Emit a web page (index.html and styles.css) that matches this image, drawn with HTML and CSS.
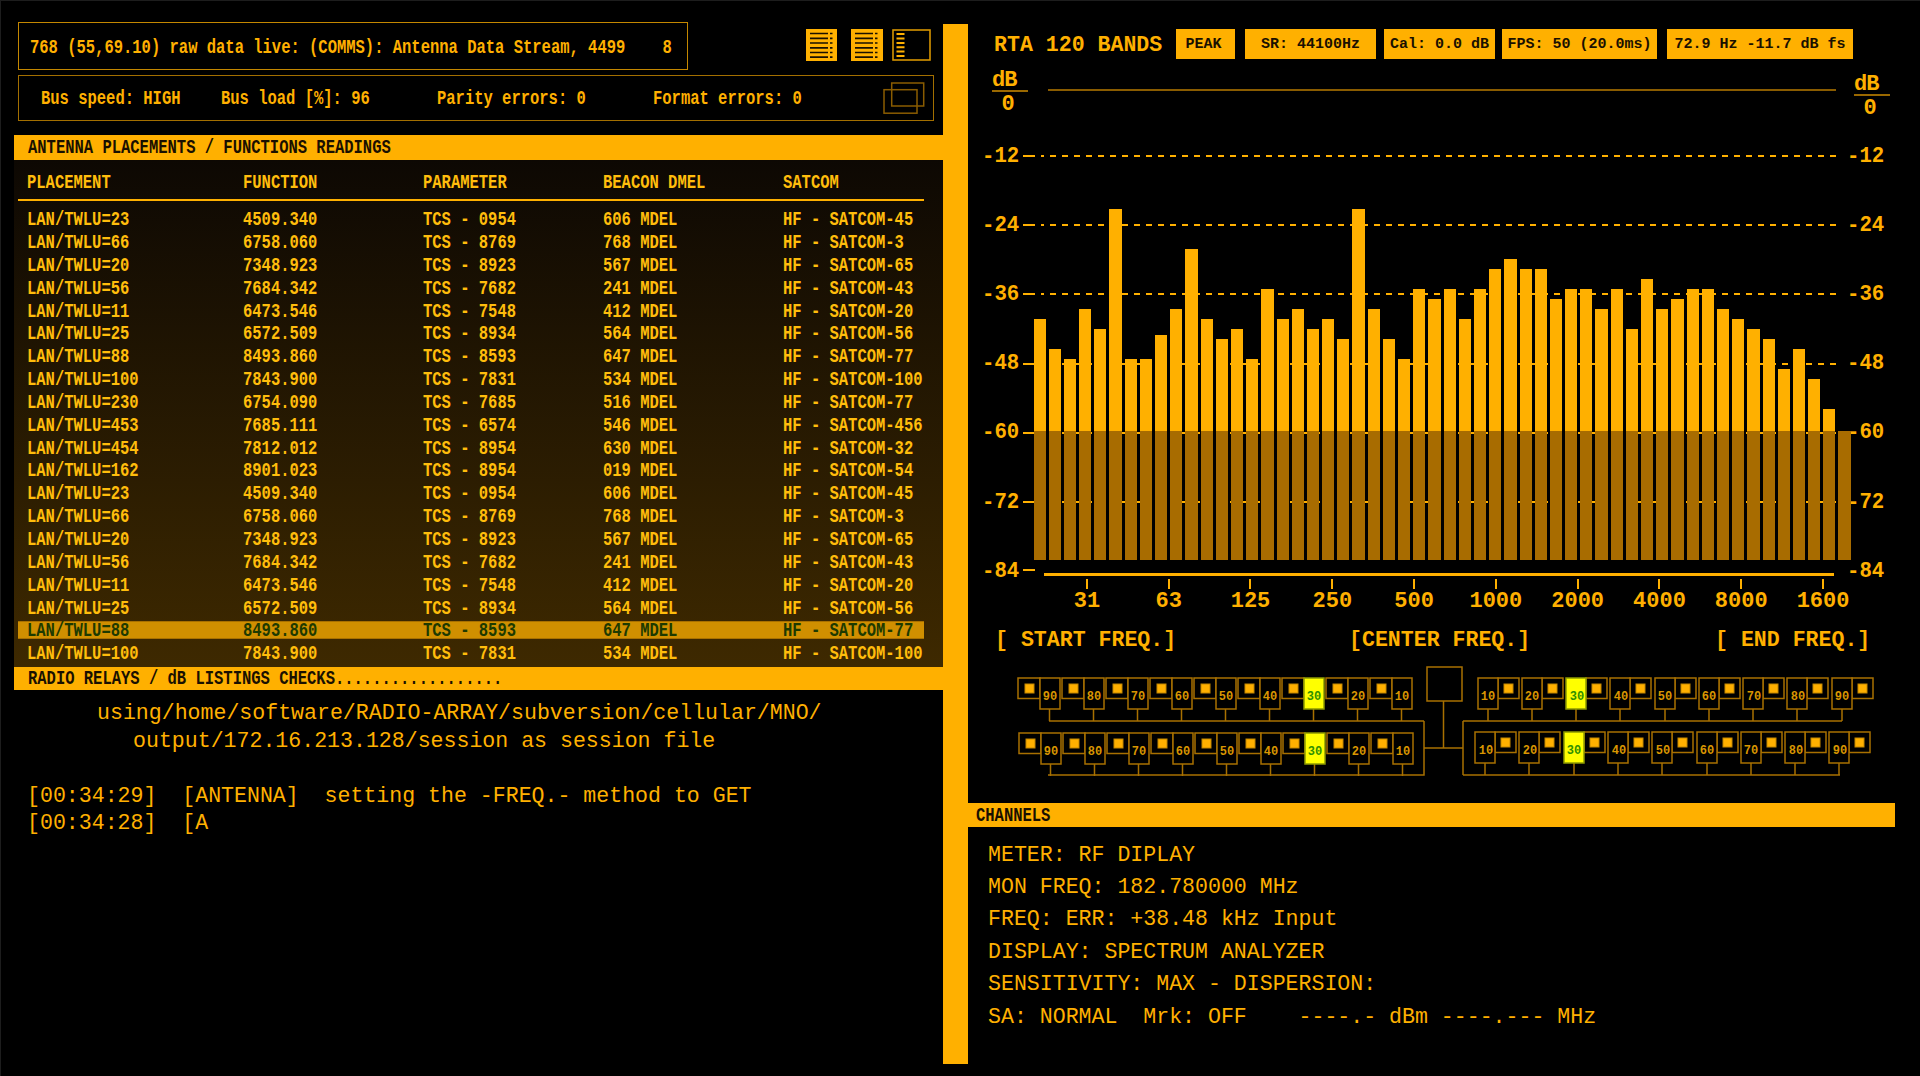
FILE: index.html
```html
<!DOCTYPE html>
<html lang="en">
<head>
<meta charset="utf-8">
<title>RTA 120 Bands</title>
<link rel="stylesheet" href="styles.css">
</head>
<body>
<div class="app">
  <section class="left">
    <div class="top-row">
      <div class="box stream"><span class="sq">768 (55,69.10) raw data live: (COMMS): Antenna Data Stream, 4499    8</span></div>
      <div class="icons">
        <svg class="icon" width="31" height="32" viewBox="0 0 31 32"><rect width="31" height="32" fill="#ffb000"/><path d="M4 4.500h18M4 9.300h18M4 14h18M4 18.800h18M4 23.500h18M4 28.200h18M24 4.500h2.500M24 9.300h2.500M24 14h2.500M24 18.800h2.500M24 23.500h2.500M24 28.200h2.500" stroke="#1a1000" stroke-width="1.700"/></svg>
        <svg class="icon" width="32" height="32" viewBox="0 0 32 32"><rect width="32" height="32" fill="#ffb000"/><path d="M4 4.500h18M4 9.300h18M4 14h18M4 18.800h18M4 23.500h18M4 28.200h18M24 4.500h2.500M24 9.300h2.500M24 14h2.500M24 18.800h2.500M24 23.500h2.500M24 28.200h2.500" stroke="#1a1000" stroke-width="1.700"/></svg>
        <svg class="icon" width="39" height="32" viewBox="0 0 39 32"><rect x="1" y="1" width="37" height="30" fill="none" stroke="#d69400" stroke-width="1.600"/><path d="M4.500 5h8M4.500 9.500h8M4.500 14h8M4.500 18.200h8M4.500 22.600h8M4.500 27h8" stroke="#ffb000" stroke-width="2"/></svg>
      </div>
    </div>
    <div class="box bus">
      <span class="sq">Bus speed: HIGH</span>
      <span class="sq">Bus load [%]: 96</span>
      <span class="sq">Parity errors: 0</span>
      <span class="sq">Format errors: 0</span>
      <svg class="windows" width="42" height="32" viewBox="0 0 42 32"><rect x="8.700" y="1" width="32" height="23" fill="none" stroke="#8a5c00" stroke-width="1.500"/><rect x="1" y="7.700" width="33" height="23.500" fill="none" stroke="#8a5c00" stroke-width="1.500"/></svg>
    </div>
    <h2 class="bar"><span class="sq">ANTENNA PLACEMENTS / FUNCTIONS READINGS</span></h2>
    <div class="table">
      <div class="row head"><span>PLACEMENT</span><span>FUNCTION</span><span>PARAMETER</span><span>BEACON DMEL</span><span>SATCOM</span></div>
      <div class="rows">
        <div class="row"><span>LAN/TWLU=23</span><span>4509.340</span><span>TCS - 0954</span><span>606 MDEL</span><span>HF - SATCOM-45</span></div>
        <div class="row"><span>LAN/TWLU=66</span><span>6758.060</span><span>TCS - 8769</span><span>768 MDEL</span><span>HF - SATCOM-3</span></div>
        <div class="row"><span>LAN/TWLU=20</span><span>7348.923</span><span>TCS - 8923</span><span>567 MDEL</span><span>HF - SATCOM-65</span></div>
        <div class="row"><span>LAN/TWLU=56</span><span>7684.342</span><span>TCS - 7682</span><span>241 MDEL</span><span>HF - SATCOM-43</span></div>
        <div class="row"><span>LAN/TWLU=11</span><span>6473.546</span><span>TCS - 7548</span><span>412 MDEL</span><span>HF - SATCOM-20</span></div>
        <div class="row"><span>LAN/TWLU=25</span><span>6572.509</span><span>TCS - 8934</span><span>564 MDEL</span><span>HF - SATCOM-56</span></div>
        <div class="row"><span>LAN/TWLU=88</span><span>8493.860</span><span>TCS - 8593</span><span>647 MDEL</span><span>HF - SATCOM-77</span></div>
        <div class="row"><span>LAN/TWLU=100</span><span>7843.900</span><span>TCS - 7831</span><span>534 MDEL</span><span>HF - SATCOM-100</span></div>
        <div class="row"><span>LAN/TWLU=230</span><span>6754.090</span><span>TCS - 7685</span><span>516 MDEL</span><span>HF - SATCOM-77</span></div>
        <div class="row"><span>LAN/TWLU=453</span><span>7685.111</span><span>TCS - 6574</span><span>546 MDEL</span><span>HF - SATCOM-456</span></div>
        <div class="row"><span>LAN/TWLU=454</span><span>7812.012</span><span>TCS - 8954</span><span>630 MDEL</span><span>HF - SATCOM-32</span></div>
        <div class="row"><span>LAN/TWLU=162</span><span>8901.023</span><span>TCS - 8954</span><span>019 MDEL</span><span>HF - SATCOM-54</span></div>
        <div class="row"><span>LAN/TWLU=23</span><span>4509.340</span><span>TCS - 0954</span><span>606 MDEL</span><span>HF - SATCOM-45</span></div>
        <div class="row"><span>LAN/TWLU=66</span><span>6758.060</span><span>TCS - 8769</span><span>768 MDEL</span><span>HF - SATCOM-3</span></div>
        <div class="row"><span>LAN/TWLU=20</span><span>7348.923</span><span>TCS - 8923</span><span>567 MDEL</span><span>HF - SATCOM-65</span></div>
        <div class="row"><span>LAN/TWLU=56</span><span>7684.342</span><span>TCS - 7682</span><span>241 MDEL</span><span>HF - SATCOM-43</span></div>
        <div class="row"><span>LAN/TWLU=11</span><span>6473.546</span><span>TCS - 7548</span><span>412 MDEL</span><span>HF - SATCOM-20</span></div>
        <div class="row"><span>LAN/TWLU=25</span><span>6572.509</span><span>TCS - 8934</span><span>564 MDEL</span><span>HF - SATCOM-56</span></div>
        <div class="row selected"><span>LAN/TWLU=88</span><span>8493.860</span><span>TCS - 8593</span><span>647 MDEL</span><span>HF - SATCOM-77</span></div>
        <div class="row"><span>LAN/TWLU=100</span><span>7843.900</span><span>TCS - 7831</span><span>534 MDEL</span><span>HF - SATCOM-100</span></div>
      </div>
    </div>
    <h2 class="bar relays"><span class="sq">RADIO RELAYS / dB LISTINGS CHECKS..................</span></h2>
    <div class="log">
      <p class="path1">using/home/software/RADIO-ARRAY/subversion/cellular/MNO/</p>
      <p class="path2">output/172.16.213.128/session as session file</p>
      <p>&nbsp;</p>
      <p>[00:34:29]  [ANTENNA]  setting the -FREQ.- method to GET</p>
      <p>[00:34:28]  [A</p>
    </div>
  </section>

  <div class="divider"></div>

  <section class="right">
    <header class="rta">
      <h1 class="title">RTA 120 BANDS</h1>
      <span class="chip c1">PEAK</span>
      <span class="chip c2">SR: 44100Hz</span>
      <span class="chip c3">Cal: 0.0 dB</span>
      <span class="chip c4">FPS: 50 (20.0ms)</span>
      <span class="chip c5">72.9 Hz -11.7 dB fs</span>
    </header>

    <div class="chart">
      <div class="db-row">
        <div class="db"><span class="db-unit">dB</span><span class="db-zero">0</span></div>
        <div class="topline"></div>
        <div class="db db-right"><span class="db-unit">dB</span><span class="db-zero">0</span></div>
      </div>
      <div class="scale-row"><span class="lab">-12</span><i class="dash"></i><i class="dots"></i><span class="lab">-12</span></div>
      <div class="scale-row"><span class="lab">-24</span><i class="dash"></i><i class="dots"></i><span class="lab">-24</span></div>
      <div class="scale-row"><span class="lab">-36</span><i class="dash"></i><i class="dots"></i><span class="lab">-36</span></div>
      <div class="scale-row"><span class="lab">-48</span><i class="dash"></i><i class="dots"></i><span class="lab">-48</span></div>
      <div class="scale-row"><span class="lab">-60</span><i class="dash"></i><i class="dots"></i><span class="lab">-60</span></div>
      <div class="scale-row"><span class="lab">-72</span><i class="dash"></i><i class="dots"></i><span class="lab">-72</span></div>
      <div class="base-row">
        <span class="lab">-84</span><i class="dash up"></i>
        <div class="axis">
          <div class="axis-line"></div>
          <div class="ticks">
            <span>31</span><span>63</span><span>125</span><span>250</span><span>500</span><span>1000</span><span>2000</span><span>4000</span><span>8000</span><span>1600</span>
          </div>
        </div>
        <span class="lab">-84</span>
      </div>
      <div class="bars">
        <i style="height:241px"></i><i style="height:211px"></i><i style="height:201px"></i><i style="height:251px"></i><i style="height:231px"></i><i style="height:351px"></i><i style="height:201px"></i><i style="height:201px"></i><i style="height:225px"></i><i style="height:251px"></i><i style="height:311px"></i><i style="height:241px"></i><i style="height:221px"></i><i style="height:231px"></i><i style="height:201px"></i><i style="height:271px"></i><i style="height:241px"></i><i style="height:251px"></i><i style="height:231px"></i><i style="height:241px"></i><i style="height:221px"></i><i style="height:351px"></i><i style="height:251px"></i><i style="height:221px"></i><i style="height:201px"></i><i style="height:271px"></i><i style="height:261px"></i><i style="height:271px"></i><i style="height:241px"></i><i style="height:271px"></i><i style="height:291px"></i><i style="height:301px"></i><i style="height:291px"></i><i style="height:291px"></i><i style="height:261px"></i><i style="height:271px"></i><i style="height:271px"></i><i style="height:251px"></i><i style="height:271px"></i><i style="height:231px"></i><i style="height:281px"></i><i style="height:251px"></i><i style="height:261px"></i><i style="height:271px"></i><i style="height:271px"></i><i style="height:251px"></i><i style="height:241px"></i><i style="height:231px"></i><i style="height:221px"></i><i style="height:191px"></i><i style="height:211px"></i><i style="height:181px"></i><i style="height:151px"></i><i style="height:129px"></i>
      </div>
    </div>

    <div class="freqs"><span>[ START FREQ.]</span><span>[CENTER FREQ.]</span><span>[ END FREQ.]</span></div>

    <svg class="wiring" width="952" height="130" viewBox="968 660 952 130">
      <g class="wires">
        <defs>
          <g id="l-cell"><rect x="0" y="0" width="22" height="20.500"/><rect class="knob" x="7" y="6" width="9" height="9"/><path d="M31.500 31v12"/><rect class="num" x="22" y="0" width="20" height="31"/></g>
          <g id="l-cell-on"><rect x="0" y="0" width="22" height="20.500"/><rect class="knob" x="7" y="6" width="9" height="9"/><path d="M31.500 31v12"/><rect class="on" x="22" y="0" width="20" height="31"/></g>
          <g id="r-cell"><rect x="20" y="0" width="21" height="20.500"/><rect class="knob" x="26" y="6" width="9" height="9"/><path d="M10 31v12"/><rect class="num" x="0" y="0" width="20" height="31"/></g>
          <g id="r-cell-on"><rect x="20" y="0" width="21" height="20.500"/><rect class="knob" x="26" y="6" width="9" height="9"/><path d="M10 31v12"/><rect class="on" x="0" y="0" width="20" height="31"/></g>
        </defs>
        <rect x="1427" y="667" width="35" height="34"/>
        <path d="M1049 721H1424M1048 775H1424V721M1424 748H1463M1443.500 701V748M1463 721V775M1463 721H1842M1463 775H1840"/>
        <use href="#l-cell" x="1018" y="678"/><use href="#l-cell" x="1062" y="678"/><use href="#l-cell" x="1106" y="678"/><use href="#l-cell" x="1150" y="678"/><use href="#l-cell" x="1194" y="678"/><use href="#l-cell" x="1238" y="678"/><use href="#l-cell-on" x="1282" y="678"/><use href="#l-cell" x="1326" y="678"/><use href="#l-cell" x="1370" y="678"/>
        <use href="#l-cell" x="1019" y="733"/><use href="#l-cell" x="1063" y="733"/><use href="#l-cell" x="1107" y="733"/><use href="#l-cell" x="1151" y="733"/><use href="#l-cell" x="1195" y="733"/><use href="#l-cell" x="1239" y="733"/><use href="#l-cell-on" x="1283" y="733"/><use href="#l-cell" x="1327" y="733"/><use href="#l-cell" x="1371" y="733"/>
        <use href="#r-cell" x="1478" y="678"/><use href="#r-cell" x="1522" y="678"/><use href="#r-cell-on" x="1566" y="678"/><use href="#r-cell" x="1610" y="678"/><use href="#r-cell" x="1655" y="678"/><use href="#r-cell" x="1699" y="678"/><use href="#r-cell" x="1743" y="678"/><use href="#r-cell" x="1787" y="678"/><use href="#r-cell" x="1832" y="678"/>
        <use href="#r-cell" x="1475" y="732"/><use href="#r-cell" x="1519" y="732"/><use href="#r-cell-on" x="1564" y="732"/><use href="#r-cell" x="1608" y="732"/><use href="#r-cell" x="1652" y="732"/><use href="#r-cell" x="1697" y="732"/><use href="#r-cell" x="1741" y="732"/><use href="#r-cell" x="1785" y="732"/><use href="#r-cell" x="1829" y="732"/>
      </g>
      <g class="nums">
        <text x="1050" y="700">90</text><text x="1094" y="700">80</text><text x="1138" y="700">70</text><text x="1182" y="700">60</text><text x="1226" y="700">50</text><text x="1270" y="700">40</text><text class="hot" x="1314" y="700">30</text><text x="1358" y="700">20</text><text x="1402" y="700">10</text>
        <text x="1051" y="755">90</text><text x="1095" y="755">80</text><text x="1139" y="755">70</text><text x="1183" y="755">60</text><text x="1227" y="755">50</text><text x="1271" y="755">40</text><text class="hot" x="1315" y="755">30</text><text x="1359" y="755">20</text><text x="1403" y="755">10</text>
        <text x="1488" y="700">10</text><text x="1532" y="700">20</text><text class="hot" x="1577" y="700">30</text><text x="1621" y="700">40</text><text x="1665" y="700">50</text><text x="1709" y="700">60</text><text x="1754" y="700">70</text><text x="1798" y="700">80</text><text x="1842" y="700">90</text>
        <text x="1486" y="754">10</text><text x="1530" y="754">20</text><text class="hot" x="1574" y="754">30</text><text x="1619" y="754">40</text><text x="1663" y="754">50</text><text x="1707" y="754">60</text><text x="1751" y="754">70</text><text x="1796" y="754">80</text><text x="1840" y="754">90</text>
      </g>
    </svg>

    <h2 class="bar channels"><span class="sq">CHANNELS</span></h2>
    <div class="readout">
      <p>METER: RF DIPLAY</p>
      <p>MON FREQ: 182.780000 MHz</p>
      <p>FREQ: ERR: +38.48 kHz Input</p>
      <p>DISPLAY: SPECTRUM ANALYZER</p>
      <p>SENSITIVITY: MAX - DISPERSION:</p>
      <p>SA: NORMAL  Mrk: OFF    ----.- dBm ----.--- MHz</p>
    </div>
  </section>
</div>
</body>
</html>
```
FILE: styles.css
```css
* { box-sizing: border-box; }
html, body { margin: 0; padding: 0; background: #000; }
body {
  width: 1920px;
  height: 1076px;
  overflow: hidden;
  color: #ffb000;
  font-family: "Liberation Mono", "DejaVu Sans Mono", monospace;
  border-top: 1px solid #1d1d1d;
  border-left: 1px solid #1d1d1d;
}
h1, h2, p { margin: 0; font-weight: normal; }
i { display: block; }

.app {
  display: grid;
  grid-template-columns: 942px 25px 952px;
  height: 1075px;
}

/* condensed small type shared by all small labels */
.sq, .row > span {
  display: block;
  font-size: 20px;
  font-weight: bold;
  white-space: pre;
  transform: scaleX(.775);
  transform-origin: 0 50%;
}

/* left column */
.left { padding-top: 21px; }
.top-row { display: flex; height: 48px; margin-left: 17px; }
.box { border: 1.500px solid #c48700; }
.stream {
  width: 670px;
  height: 48px;
  display: flex;
  align-items: center;
  padding: 2px 0 0 11px;
}
.icons { display: flex; gap: 13px; margin: 7px 0 0 118px; align-items: flex-start; }
.icon:nth-child(2) { margin: 0 -4px 0 1px; }
.bus {
  display: grid;
  grid-template-columns: 180px 216px 216px 1fr auto;
  align-items: center;
  width: 916px;
  height: 46px;
  margin: 5px 0 0 17px;
  padding: 0 8px 0 21.500px;
  border-color: #a36f00;
}

.bar {
  display: flex;
  align-items: center;
  background: #ffb000;
  color: #1a1000;
  height: 25px;
  margin: 14px 0 0 13px;
  padding-left: 14px;
}
.table {
  margin-left: 13px;
  height: 507px;
  padding: 8px 19px 0 4px;
  background: linear-gradient(#0d0803, #3e2900);
  color: #ffbd0c;
}
.row {
  display: grid;
  grid-template-columns: 216px 180px 180px 180px 1fr;
  align-items: center;
  padding-left: 9px;
  height: 22.850px;
}
.head {
  height: 33px;
  padding-bottom: 3px;
  border-bottom: 2px solid #ffb000;
}
.rows { margin-top: 7.200px; }
.selected {
  color: #1d3a00;
  background: linear-gradient(transparent 2.400px, #a87000 2.400px 3.400px, #d08f00 3.400px 19.400px, #a87000 19.400px 20.400px, transparent 20.400px);
}

.relays { margin-top: 0; height: 23px; }
.log {
  padding: 10px 0 0 26px;
  font-size: 22px;
  font-weight: bold;
  line-height: 27.500px;
}
.log p { white-space: pre; transform: scaleX(.98); transform-origin: 0 50%; }
.path1 { margin-left: 70px; }
.path2 { margin-left: 106px; }

.divider { background: #ffb000; margin-top: 23px; height: 1040px; }

/* right column */
.right { padding-top: 28px; }
.rta { display: flex; align-items: stretch; height: 30px; padding-left: 26px; }
.title {
  width: 182px;
  padding-top: 2px;
  font-size: 22px;
  font-weight: bold;
  line-height: 30px;
  white-space: pre;
  transform: scaleX(.98);
  transform-origin: 0 50%;
}
.chip {
  display: flex;
  align-items: center;
  justify-content: center;
  background: #ffb000;
  color: #1a1000;
  font-size: 15px;
  font-weight: bold;
  white-space: pre;
}
.c1 { width: 59px; padding-right: 4px; }
.c2 { width: 131px; margin-left: 10px; }
.c3 { width: 111px; margin-left: 8px; }
.c4 { width: 155px; margin-left: 7px; }
.c5 { width: 186px; margin-left: 10px; }

.chart { position: relative; margin-top: 5px; height: 548px; font-size: 22px; font-weight: bold; }
.db-row { display: flex; height: 57.500px; align-items: flex-start; }
.db { display: flex; flex-direction: column; align-items: center; width: 36px; margin-left: 24px; flex: none; padding-top: 3px; }
.db-unit { width: 36px; height: 25px; line-height: 27px; letter-spacing: -1px; border-bottom: 2px solid #9a6800; }
.db-zero { line-height: 25px; margin-right: 4px; }
.db-right { margin-left: 18px; padding-top: 7px; }
.topline { width: 788px; height: 2px; margin: 25px 0 0 20px; background: #8a5c00; }

.scale-row { display: flex; align-items: center; height: 69.200px; padding-left: 14px; }
.lab { width: 41px; flex: none; line-height: 27px; white-space: pre; transform: scaleX(.94); transform-origin: 0 50%; }
.dash { width: 12px; height: 2px; background: #ffb000; flex: none; }
.dots {
  flex: none;
  width: 795px;
  height: 2px;
  margin: 0 11px 0 6px;
  background: repeating-linear-gradient(90deg, #ffb000 0 3px, transparent 3px 9px, #ffb000 9px 12px);
}
.base-row { display: flex; align-items: flex-start; margin-top: 21.800px; padding-left: 14px; }
.dash.up { margin-top: 10.500px; }
.axis { width: 790px; margin: 14.500px 13px 0 9px; flex: none; }
.axis-line { height: 3px; background: #ffb000; }
.ticks { display: grid; grid-template-columns: repeat(10, 81.800px); margin-left: 2px; padding-top: 3px; }
.ticks span {
  display: flex;
  flex-direction: column;
  align-items: center;
  line-height: 26px;
  white-space: pre;
}
.ticks span::before { content: ""; width: 2px; height: 10px; background: #ffb000; }

.bars {
  position: absolute;
  left: 65.500px;
  top: 0;
  height: 496px;
  display: flex;
  align-items: flex-end;
  gap: 3px;
}
.bars i {
  width: 12.200px;
  background: linear-gradient(to top, #a86c00 129px, #ffb000 129px);
}

.freqs {
  display: grid;
  grid-template-columns: 354px 366px 1fr;
  padding-left: 27px;
  margin-top: 14.500px;
  font-size: 22px;
  font-weight: bold;
  line-height: 27px;
}
.freqs span { white-space: pre; transform: scaleX(.98); transform-origin: 0 50%; }
.wiring { display: block; margin-top: 6.500px; }
.wires rect, .wires path { fill: none; stroke: #a87000; stroke-width: 1.500; }
.wires .num { fill: #000; }
.wires .on { fill: #ffff00; stroke: #8f9a00; }
.wires .knob { fill: #ffb000; stroke: #c48700; stroke-width: 1; }
.nums text {
  fill: #d99600;
  font-family: "Liberation Mono", monospace;
  font-size: 12px;
  font-weight: bold;
  text-anchor: middle;
}
.nums .hot { fill: #2f8f00; }

.channels { margin: 13px 25px 0 0; height: 24px; padding-left: 8px; }
.readout {
  padding: 12.500px 0 0 20px;
  font-size: 22px;
  font-weight: bold;
  line-height: 32.400px;
}
.readout p { white-space: pre; transform: scaleX(.98); transform-origin: 0 50%; }
```
